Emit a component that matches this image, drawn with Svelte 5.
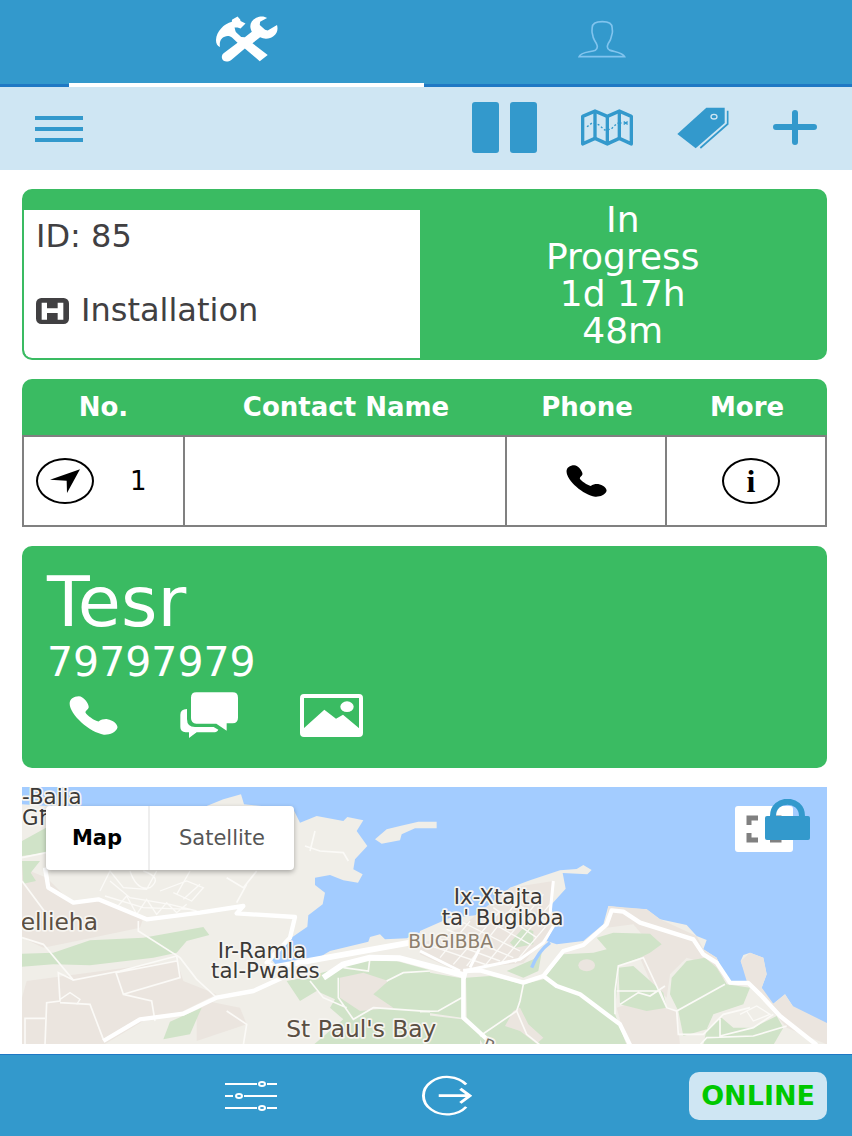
<script lang="ts">
	type MapType = 'map' | 'satellite';

	const job = { id: 85, type: 'Installation' };
	const status = ['In', 'Progress', '1d 17h', '48m'];
	const columns = ['No.', 'Contact Name', 'Phone', 'More'];
	const contacts = [{ no: 1, name: '' }];

	let tab = $state('jobs');
	let mapType = $state<MapType>('map');
</script>

{#snippet phone()}
	<svg viewBox="162 467 149 118" preserveAspectRatio="none" aria-hidden="true">
		<path
			fill="currentColor"
			d="M164 490C164 477 176 468 192 468C206 468 222 490 222 500C222 507 212 510 212 517C216 525 240 543 252 544C260 538 270 536 279 537C297 540 312 553 309 564C304 578 285 585 268 584C225 578 163 522 164 490Z"
		/>
	</svg>
{/snippet}

<div class="app">
	<header>
		<nav class="tabs">
			<button class:active={tab === 'jobs'} aria-label="Jobs" onclick={() => (tab = 'jobs')}>
				<svg class="tools" viewBox="48 46 187 138" fill="#fff" aria-hidden="true">
					<path
						d="M60 139C52 137 48 128 48 118C49 92 72 69 96 63L96 57L113 47L121 56L122 61L137 68L122 83L113 80L104 80C106 87 106 92 110 96L124 109L135 110L156 93C145 73 155 54 178 48C188 46 197 48 202 52L181 63L180 73L196 87L204 89L232 73C236 87 232 98 222 106C211 115 195 117 181 110L158 128L204 163L180 182L135 144L94 178C83 186 69 184 66 173C65 167 66 162 71 158L113 126L97 111C91 106 82 105 74 108C61 113 58 125 60 139Z"
					/>
				</svg>
			</button>
			<button class:active={tab === 'profile'} aria-label="Profile" onclick={() => (tab = 'profile')}>
				<svg class="person" viewBox="53 57 146 116" aria-hidden="true">
					<path
						fill="none"
						stroke="#81c4ee"
						stroke-width="5"
						d="M56 169H195C189 156 166 155 149 149C136 142 145 128 151 119C154 113 154 108 156 102C160 93 157 89 157 81C157 67 145 62 127 62C109 62 96 67 96 81C96 88 94 93 97 100C98 107 99 113 103 119C110 130 117 141 106 149C91 156 62 153 56 169Z"
					/>
				</svg>
			</button>
		</nav>
	</header>

	<div class="toolbar">
		<button class="menu" aria-label="Menu"><span></span><span></span><span></span></button>
		<div class="actions">
			<button class="pause" aria-label="Pause"><span></span><span></span></button>
			<button aria-label="Map">
				<svg width="52" height="37" viewBox="372 57 156 106" preserveAspectRatio="none" aria-hidden="true">
					<g fill="none" stroke="#3399cc" stroke-width="10" stroke-linejoin="round">
						<path d="M377 78L414 63L451 78L487 63L523 78V157L487 141L451 157L414 141L377 157Z" />
						<path d="M414 63V141M451 78V157M487 63V141" />
						<path stroke-width="4" stroke-dasharray="6 6" d="M390 108L405 97L425 102L443 117L462 115L480 98L495 97" />
						<path stroke-width="4" d="M500 93L512 101M512 93L500 101" />
					</g>
				</svg>
			</button>
			<button aria-label="Tags">
				<svg width="52" height="42" viewBox="655 46 156 126" preserveAspectRatio="none" aria-hidden="true">
					<path fill="#3399cc" d="M656 127L743 48H798V94L711 170Z" />
					<path fill="none" stroke="#3399cc" stroke-width="5" d="M807 57V97L725 169" />
					<ellipse cx="766" cy="75" rx="9" ry="7" fill="none" stroke="#cfe6f3" stroke-width="4" />
				</svg>
			</button>
			<button aria-label="Add">
				<svg width="44" height="35" viewBox="0 0 44 35" aria-hidden="true">
					<path fill="none" stroke="#3399cc" stroke-width="6" stroke-linecap="round" d="M3 17H41M22 3V32" />
				</svg>
			</button>
		</div>
	</div>

	<main>
		<section class="job">
			<div class="info">
				<p>ID: {job.id}</p>
				<p class="kind">
					<svg width="33" height="26" viewBox="63 360 99 78" preserveAspectRatio="none" aria-hidden="true">
						<rect x="63" y="360" width="99" height="78" rx="16" fill="#414042" />
						<path fill="#fff" d="M80 374H96V391H128V374H145V425H128V405H96V425H80Z" />
					</svg>
					{job.type}
				</p>
			</div>
			<div class="status">
				{#each status as line}
					<span>{line}</span>
				{/each}
			</div>
		</section>

		<table>
			<thead>
				<tr>
					{#each columns as column}
						<th scope="col">{column}</th>
					{/each}
				</tr>
			</thead>
			<tbody>
				{#each contacts as contact}
					<tr>
						<td>
							<div class="number">
								<button class="round" aria-label="Navigate">
									<svg width="30" height="24" viewBox="100 299 90 72" preserveAspectRatio="none" aria-hidden="true">
										<path d="M100 331L190 300L151 371L150 334Z" />
									</svg>
								</button>
								<span>{contact.no}</span>
							</div>
						</td>
						<td>{contact.name}</td>
						<td><button class="call small" aria-label="Call contact">{@render phone()}</button></td>
						<td class="more"><button class="round" aria-label="More information">i</button></td>
					</tr>
				{/each}
			</tbody>
		</table>

		<section class="client">
			<h1>Tesr</h1>
			<p>79797979</p>
			<div class="links">
				<button class="call" aria-label="Call client">{@render phone()}</button>
				<button aria-label="Messages">
					<svg width="58" height="46" viewBox="495 458 174 138" preserveAspectRatio="none" aria-hidden="true">
						<g fill="#fff">
							<path d="M544 459H653Q669 459 669 475V535Q669 551 653 552H635V574L604 553H544Q528 552 528 536V475Q528 459 544 459Z" />
							<path d="M516 509V539Q516 563 540 563H596L610 571Q606 579 595 579H545L522 596V579H512Q496 578 496 563V526Q496 510 516 509Z" />
						</g>
					</svg>
				</button>
				<button aria-label="Pictures">
					<svg width="63" height="43" viewBox="853 463 189 129" preserveAspectRatio="none" aria-hidden="true">
						<rect x="859" y="469" width="177" height="117" rx="6" fill="none" stroke="#fff" stroke-width="12" />
						<path fill="#fff" d="M861 569L926 510L961 537L982 525L1034 569V588H861Z" />
						<ellipse cx="994" cy="501" rx="20" ry="16" fill="#fff" />
					</svg>
				</button>
			</div>
		</section>

		<section class="map">
			<svg class="canvas" viewBox="36 18 2415 774" preserveAspectRatio="xMinYMin slice" role="img" aria-label="Map of St Paul's Bay">
				<rect x="36" y="18" width="2415" height="774" fill="#a3ccff" />

				<!-- land -->
				<g fill="#f0eee8">
					<path d="M36 70L110 75H590L640 55L693 40L702 70L850 85L870 125L920 105L1000 120L1012 108L1060 118L1040 150L1072 195L1035 235L1030 265L1058 280L1044 305L1000 298L960 282L915 290L915 312L945 335L938 370L895 403L892 437L830 480L785 535L800 555L900 545L960 510L1075 482L1080 468L1110 460L1125 475L1190 472L1240 450L1400 420V792H36Z" />
					<path d="M1095 175L1130 145L1170 135L1225 122H1280V142H1215L1175 160L1170 178L1115 188Z" />
					<g transform="translate(1230 0)">
						<path d="M0 450L90 410L200 400L270 320L330 298L420 268L470 264L490 252L515 267L502 280L428 276L437 323L395 370L400 440L380 480L410 490L490 480L550 430L565 375L620 382L680 385L720 415L800 432L830 465L860 477L850 505L890 530L920 600L985 600L962 540L970 522L990 515L1030 530L1040 580L1025 620L1045 665L1060 668L1095 640L1118 675L1120 705L1165 722L1225 728V792H0Z" />
					</g>
				</g>

				<!-- built-up areas -->
				<g fill="#ebe5df">
					<path d="M60 270L110 290L180 360L260 355L400 410L390 440L200 480L100 500L36 470V250Z" />
					<path d="M50 600L500 540L520 600L620 640L500 700L400 720L280 792H36V650Z" />
					<path d="M590 660L690 680L710 730L560 780L560 690Z" />
					<g transform="translate(1230 0)">
						<path d="M0 490L120 440L270 320L400 300L395 370L400 440L310 545L180 560L130 580L0 520Z" />
						<path d="M565 375L680 385L720 415L830 465L850 505L890 530L920 600L850 545L800 530L750 580L740 650L690 600L660 530L700 500L640 430L560 440Z" />
						<path d="M962 540L990 515L1030 530L1040 580L1025 620L1060 668L1095 640L1118 675L1225 728V792L1100 740L980 600Z" />
						<path d="M590 680L680 650L770 690L780 792H620Z" />
					</g>
				</g>

				<!-- parks and fields -->
				<g fill="#d0e3c8">
					<path d="M36 180L108 140V215L36 225ZM36 240L90 240L62 275L78 300L40 308Z" />
					<path d="M36 518L130 515L240 478L400 470L580 438L598 462L530 480L500 515L430 530L240 553L130 550L36 557Z" />
					<path d="M480 722L575 680L540 760L460 775Z" />
					<path d="M830 600L880 590L990 560L1060 540L1160 540L1260 568V792H910L1000 715L960 680L975 655L920 630L870 660Z" />
					<g transform="translate(1230 0)">
						<path d="M0 570L125 592V710L0 692ZM0 700L125 715L180 760V792H0Z" />
						<path d="M138 590L210 585L310 610L370 595L430 520L520 515L560 505L530 470L580 455L690 458L725 490L690 515L660 530L595 555L585 700L620 792H190L140 710Z" />
						<path d="M260 570L340 535L365 515L355 570L310 590Z" />
						<path d="M270 485L310 440L340 450L340 490L285 500Z" />
						<path d="M595 560L640 555L730 635L740 680L680 690L600 670Z" />
						<path d="M755 590L800 540L855 530L890 560L920 610L990 620L970 670L880 700L860 745L790 765L775 690L750 640Z" />
						<path d="M860 745L905 710L940 740H1000L1070 705L1090 740L1060 792H850Z" />
					</g>
				</g>
				<g fill="#ebe5df">
					<path d="M990 590L1060 575L1135 600L1090 640L1150 680L1050 690L990 650Z" />
					<g transform="translate(1230 0)">
						<ellipse cx="500" cy="553" rx="25" ry="18" />
						<path d="M280 690L300 680L325 730L370 770L350 788L300 750L255 735Z" />
					</g>
				</g>
				<path fill="none" stroke="#a3ccff" stroke-width="10" d="M1565 560Q1585 510 1620 485" />

				<!-- minor roads -->
				<g fill="none" stroke="#fbfaf7" stroke-width="5">
					<path d="M36 470L100 490L190 597L330 570L500 525L510 590L340 640L318 575L500 540M36 300L110 400M36 230L108 215" />
					<path d="M385 420V450L510 530L560 595L620 650M190 597L145 575L150 660L110 665L105 792M150 665L240 670L280 775M45 792V712H105M340 640L425 660L435 720" />
					<path d="M650 690L710 730L700 792M650 290L700 320L740 270M680 365L710 310M885 195L930 210L1000 215L1015 240M900 210L915 150" />
					<path d="M900 600L940 650L1010 680M1080 530L1075 570L1000 560M985 590V650L1030 715L1090 680L1260 692M1130 600L1180 575L1260 570" />
					<g transform="translate(1230 0)">
						<path d="M310 610L300 660L290 690L180 765M290 690L320 760L360 792M0 692L55 690L125 650" />
						<path d="M585 700L585 630L595 555L670 530L740 680L770 690L915 610M590 630H720L740 680M600 670L655 635L690 645L735 615M770 690L775 760L850 760L910 700L990 680M840 792L860 770L1000 765L1100 735M900 710V765L1000 740L1060 700" />
					</g>
				</g>

				<!-- street grids -->
				<g fill="none" stroke="#fbfaf7" stroke-width="4">
					<path d="M270 330L300 270L340 320L410 325L440 270M300 300L360 350L480 370L560 390M285 345L400 380L540 385M320 380L350 345L380 400L410 355L440 400L470 365L500 395L530 370M360 270Q380 330 420 320Q460 290 400 270M450 330L530 300L580 320L545 360L490 335M500 340L540 270M520 355L570 310M150 655L180 635L210 655L200 670" />
					<g transform="translate(1230 0)">
						<path d="M20 490L210 555M50 470L240 540M80 445L280 530M120 420L300 510M170 400L330 490M220 380L350 470M260 350L390 430M60 530L150 420M100 550L240 390M140 555L300 350M190 560L370 340M240 550L390 370M285 545L400 410M960 700L1010 675L1050 700L1000 720L980 690" />
					</g>
				</g>

				<!-- main roads -->
				<g fill="none" stroke="#fff" stroke-width="13" stroke-linejoin="round">
					<path d="M105 260L115 320L190 365L265 355L410 415L570 395L700 375L680 397L855 408L840 470L770 545L840 580L730 630L620 650L520 698L390 715L280 780" />
					<path d="M785 560L950 530L1200 485M940 590L1000 550L1080 530L1170 532L1370 585" stroke-width="18" />
					<g transform="translate(1230 0)">
						<path d="M130 580V710L220 792M130 570L180 568L310 605L370 585L430 510L490 492L560 430L575 388L610 392L660 425L820 475L850 520L890 545L930 605L985 606L1020 640L1080 705L1190 792M370 585L410 615L480 640L600 730L630 792" />
						<path d="M0 510L120 570M130 570L300 535L370 485L410 420M150 560L180 500M400 300L390 400" stroke-width="9" />
					</g>
				</g>

				<!-- place names -->
				<g class="places">
					<text x="36" y="70">-Bajja</text>
					<text x="36" y="131">Għ</text>
					<text x="148" y="446" class="town" text-anchor="middle">ellieha</text>
					<text text-anchor="middle">
						<tspan x="766" y="531">Ir-Ramla</tspan>
						<tspan x="766" y="592">tal-Pwales</tspan>
					</text>
					<text x="1054" y="769" text-anchor="middle" class="town">St Paul's Bay</text>
					<text text-anchor="middle">
						<tspan x="1475" y="370">Ix-Xtajta</tspan>
						<tspan x="1478" y="431">ta' Bugibba</tspan>
					</text>
					<text x="1322" y="502" text-anchor="middle" class="district">BUGIBBA</text>
					<text x="1416" y="804" class="road" transform="rotate(20 1416 804)">R</text>
				</g>
			</svg>

			<div class="map-type">
				<button class:selected={mapType === 'map'} onclick={() => (mapType = 'map')}>Map</button>
				<button class:selected={mapType === 'satellite'} onclick={() => (mapType = 'satellite')}>Satellite</button>
			</div>
			<button class="fullscreen" aria-label="Fullscreen">
				<svg width="36" height="28" viewBox="0 0 36 28" aria-hidden="true">
					<path fill="none" stroke="#808080" stroke-width="5" d="M12 3H3V10M24 3H33V10M12 25H3V18M24 25H33V18" />
				</svg>
			</button>
			<button class="lock" aria-label="Lock map">
				<svg width="45" height="41" viewBox="0 0 45 41" aria-hidden="true">
					<path fill="none" stroke="#3399cc" stroke-width="6" d="M8 20V17C8 -2 37 -2 37 17V20" />
					<rect y="17" width="45" height="24" rx="2" fill="#3399cc" />
				</svg>
			</button>
		</section>
	</main>

	<footer>
		<button aria-label="Settings">
			<svg width="54" height="32" viewBox="0 0 54 32" fill="none" stroke="#fff" stroke-width="2" aria-hidden="true">
				<path d="M1 4H33M43 4H53M1 16H9M20 16H53M1 28H33M43 28H53" />
				<ellipse cx="38" cy="4" rx="3" ry="2" />
				<ellipse cx="15" cy="16" rx="3" ry="2" />
				<ellipse cx="38" cy="28" rx="3" ry="2" />
			</svg>
		</button>
		<button aria-label="Log out">
			<svg width="52" height="41" viewBox="527 92 125 125" preserveAspectRatio="none" fill="none" stroke="#fff" aria-hidden="true">
				<path stroke-width="7" d="M638 121A57 57 0 1 0 638 189" />
				<path stroke-width="8" d="M572 155H645M624 134L647 155L624 177" />
			</svg>
		</button>
		<span class="online">ONLINE</span>
	</footer>
</div>

<style>
	:global(body) {
		margin: 0;
		background: #fff;
	}

	.app {
		display: flex;
		flex-direction: column;
		min-height: 100vh;
		font-family: 'DejaVu Sans', Verdana, sans-serif;
		color: #414042;
	}

	button {
		display: flex;
		align-items: center;
		justify-content: center;
		padding: 0;
		border: 0;
		background: none;
		font: inherit;
		color: inherit;
		cursor: pointer;
	}

	p,
	h1 {
		margin: 0;
		font-weight: normal;
	}

	svg {
		display: block;
	}

	/* Top tabs */
	header {
		background: linear-gradient(#3399cc 84px, #1f78c4 84px);
	}

	.tabs {
		display: flex;
		height: 87px;
		padding: 0 73px 0 69px;
	}

	.tabs button {
		flex: 1;
		padding-bottom: 5px;
		border-bottom: 4px solid transparent;
	}

	.tabs .active {
		border-bottom-color: #fff;
	}

	.tools {
		width: 62px;
		height: 46px;
	}

	.person {
		width: 48px;
		height: 38px;
	}

	/* Toolbar */
	.toolbar {
		display: flex;
		align-items: center;
		justify-content: space-between;
		height: 83px;
		padding: 0 35px;
		background: #cfe6f3;
	}

	.menu {
		flex-direction: column;
		gap: 7px;
	}

	.menu span {
		width: 48px;
		height: 4px;
		background: #3399cc;
	}

	.actions {
		display: flex;
		align-items: center;
		gap: 44px;
		padding-bottom: 2px;
	}

	.pause {
		gap: 11px;
	}

	.pause span {
		width: 27px;
		height: 51px;
		border-radius: 3px;
		background: #3399cc;
	}

	main {
		display: flex;
		flex: 1;
		flex-direction: column;
		gap: 19px;
		padding: 19px 25px 10px 22px;
	}

	/* Job card */
	.job {
		display: grid;
		grid-template-columns: 99fr 101fr;
		border: 2px solid #3abb62;
		border-radius: 10px;
		background: #3abb62;
		overflow: hidden;
	}

	.info {
		display: flex;
		flex-direction: column;
		gap: 37px;
		margin-top: 19px;
		padding: 8px 12px 29px;
		border-bottom-left-radius: 8px;
		background: #fff;
		font-size: 32px;
		line-height: 37px;
	}

	.kind {
		display: flex;
		align-items: center;
		gap: 12px;
	}

	.status {
		display: flex;
		flex-direction: column;
		align-items: center;
		justify-content: center;
		color: #fff;
		font-size: 36px;
		line-height: 37px;
	}

	/* Contacts */
	table {
		width: 100%;
		table-layout: fixed;
		border-collapse: separate;
		border-spacing: 0;
		color: #000;
		font-size: 26px;
	}

	th {
		height: 56px;
		padding: 0;
		background: #3abb62;
		color: #fff;
		white-space: nowrap;
	}

	th:first-child {
		width: 163px;
		border-top-left-radius: 10px;
	}

	th:nth-child(2) {
		width: 40%;
	}

	th:last-child {
		border-top-right-radius: 10px;
	}

	td {
		height: 88px;
		padding: 0;
		border: solid #808080;
		border-width: 2px 2px 2px 0;
	}

	td:first-child {
		border-left-width: 2px;
	}

	td > button {
		margin: 0 auto;
	}

	.more > button {
		margin-left: 55px;
	}

	.number {
		display: flex;
		align-items: center;
		gap: 36px;
		padding-left: 12px;
	}

	.round {
		box-sizing: border-box;
		width: 58px;
		height: 46px;
		border: 2px solid #000;
		border-radius: 50%;
		font-family: 'Liberation Serif', serif;
		font-size: 32px;
		font-weight: bold;
	}

	.call svg {
		width: 49px;
		height: 39px;
	}

	.small svg {
		width: 41px;
		height: 32px;
	}

	/* Client card */
	.client {
		box-sizing: border-box;
		height: 222px;
		padding: 20px 25px;
		border-radius: 10px;
		background: #3abb62;
		color: #fff;
	}

	h1 {
		font-size: 70px;
		line-height: 72px;
	}

	.client p {
		font-size: 41px;
		line-height: 48px;
	}

	.links {
		display: flex;
		align-items: center;
		gap: 62px;
		padding: 6px 22px;
	}

	/* Map */
	.map {
		position: relative;
		flex: 1;
		min-height: 256px;
		overflow: hidden;
	}

	.canvas {
		position: absolute;
		width: 100%;
		height: 100%;
	}

	.places {
		fill: #3c3a38;
		stroke: #f7f5f1;
		stroke-width: 10px;
		stroke-linejoin: round;
		paint-order: stroke;
		font-size: 64px;
	}

	.town {
		fill: #5a4f43;
		font-size: 70px;
	}

	.district {
		fill: #8d7f6e;
		font-size: 56px;
	}

	.road {
		fill: #77706a;
		font-size: 50px;
	}

	.map-type {
		position: absolute;
		top: 19px;
		left: 24px;
		display: flex;
		height: 64px;
		border-radius: 4px;
		background: #fff;
		box-shadow: 0 2px 5px rgba(0, 0, 0, 0.3);
		color: #565656;
		font-size: 21px;
	}

	.map-type button {
		width: 144px;
	}

	.map-type button:first-child {
		width: 104px;
		border-right: 2px solid #eee;
	}

	.map-type .selected {
		color: #000;
		font-weight: bold;
	}

	.fullscreen {
		position: absolute;
		top: 19px;
		right: 34px;
		width: 58px;
		height: 46px;
		border-radius: 3px;
		background: #fff;
	}

	.lock {
		position: absolute;
		top: 12px;
		right: 17px;
	}

	/* Bottom bar */
	footer {
		display: grid;
		grid-template-columns: 29% 29% 1fr;
		align-items: center;
		box-sizing: border-box;
		height: 82px;
		padding: 0 25px 0 18%;
		border-top: 1px solid #1f78c4;
		background: #3399cc;
	}

	.online {
		justify-self: end;
		padding: 0 12px;
		border-radius: 10px;
		background: #cfe6f3;
		color: #00c800;
		font-size: 27px;
		font-weight: bold;
		line-height: 48px;
	}
</style>
